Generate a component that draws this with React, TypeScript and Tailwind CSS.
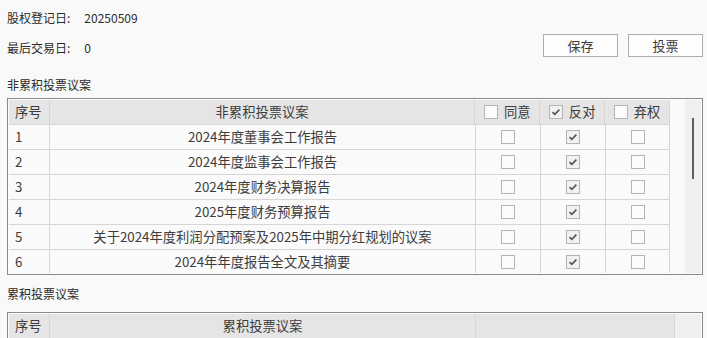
import type { ReactNode } from "react";

const proposals = [
  { no: "1", title: "2024年度董事会工作报告", vote: "against" },
  { no: "2", title: "2024年度监事会工作报告", vote: "against" },
  { no: "3", title: "2024年度财务决算报告", vote: "against" },
  { no: "4", title: "2025年度财务预算报告", vote: "against" },
  { no: "5", title: "关于2024年度利润分配预案及2025年中期分红规划的议案", vote: "against" },
  { no: "6", title: "2024年年度报告全文及其摘要", vote: "against" },
];

function CheckBox({ checked = false }: { checked?: boolean }) {
  return (
    <span
      className={`flex items-center justify-center w-[14px] h-[14px] border border-[#b4b4b4] shrink-0 ${
        checked ? "bg-[#f1f1f1]" : "bg-[#fbfbfb]"
      }`}
    >
      {checked && (
        <svg width="12" height="12" viewBox="0 0 12 12">
          <path d="M2.5 6.2 L4.8 8.4 L9.4 3.6" fill="none" stroke="#555" strokeWidth="1.6" />
        </svg>
      )}
    </span>
  );
}

function HeadVote({ label, checked }: { label: string; checked?: boolean }) {
  return (
    <div className="w-[65px] h-full flex items-center justify-center gap-[6px] border-r border-[#d6d6d6]">
      <CheckBox checked={checked} />
      <span>{label}</span>
    </div>
  );
}

function Cell({ w, children, className = "" }: { w: string; children?: ReactNode; className?: string }) {
  return <div className={`${w} h-full flex items-center border-r border-[#d6d6d6] ${className}`}>{children}</div>;
}

export default function App() {
  return (
    <div
      className="w-[707px] h-[338px] overflow-hidden bg-[#f9f9f9] pl-[7px] pr-[4px] text-[#2b2b2b]"
      style={{ fontFamily: '"Noto Sans CJK SC", "Noto Sans", sans-serif' }}
    >
      {/* top info */}
      <div className="h-[34px] flex items-center text-[12px] leading-[14px] pt-[1px]">
        <span>股权登记日:</span>
        <span className="ml-[14px]">20250509</span>
      </div>
      <div className="h-[23px] flex items-start justify-between">
        <div className="flex text-[12px] leading-[14px] mt-[7px]">
          <span>最后交易日:</span>
          <span className="ml-[14px]">0</span>
        </div>
        <div className="flex gap-[10px]">
          <button className="w-[75px] h-[23px] border border-[#adadad] bg-[#fdfdfd] text-[13px] text-[#3a3a3a] flex items-center justify-center">
            保存
          </button>
          <button className="w-[75px] h-[23px] border border-[#adadad] bg-[#fdfdfd] text-[13px] text-[#3a3a3a] flex items-center justify-center">
            投票
          </button>
        </div>
      </div>

      <div className="mt-[21px] mb-[6px] text-[12px] leading-[14px]">非累积投票议案</div>

      {/* non-cumulative table */}
      <div className="border border-[#8a8a8a] bg-[#fbfbfb] p-[1px]">
        <div className="h-[173px] flex overflow-hidden text-[13.3px] text-[#3c3c3c]">
          <div className="w-[661px] flex flex-col">
            <div className="h-[25px] shrink-0 flex bg-[#e5e5e5] border-b border-[#d6d6d6]">
              <Cell w="w-[41px]" className="pl-[6px]">序号</Cell>
              <Cell w="w-[426px]" className="justify-center">非累积投票议案</Cell>
              <HeadVote label="同意" />
              <HeadVote label="反对" checked />
              <HeadVote label="弃权" />
            </div>
            {proposals.map((p) => (
              <div key={p.no} className="h-[25px] shrink-0 flex bg-[#fafafa] border-b border-[#d6d6d6]">
                <Cell w="w-[41px]" className="pl-[6px]">{p.no}</Cell>
                <Cell w="w-[426px]" className="justify-center whitespace-nowrap">{p.title}</Cell>
                <Cell w="w-[65px]" className="justify-center">
                  <CheckBox checked={p.vote === "for"} />
                </Cell>
                <Cell w="w-[65px]" className="justify-center">
                  <CheckBox checked={p.vote === "against"} />
                </Cell>
                <Cell w="w-[64px]" className="justify-center">
                  <CheckBox checked={p.vote === "abstain"} />
                </Cell>
              </div>
            ))}
          </div>
          <div className="w-[15px] bg-[#fafafa]" />
          <div className="w-[16px] bg-[#efefef] flex justify-center pt-[18px]">
            <div className="w-[2px] h-[61px] bg-[#5f5f5f]" />
          </div>
        </div>
      </div>

      <div className="mt-[12px] mb-[11px] text-[12px] leading-[14px]">累积投票议案</div>

      {/* cumulative table */}
      <div className="border border-[#8a8a8a] bg-[#fbfbfb] p-[1px]">
        <div className="h-[60px] flex flex-col text-[13.3px] text-[#3c3c3c]">
          <div className="h-[25px] shrink-0 flex bg-[#e5e5e5] border-b border-[#d6d6d6]">
            <Cell w="w-[41px]" className="pl-[6px]">序号</Cell>
            <Cell w="w-[426px]" className="justify-center">累积投票议案</Cell>
            <Cell w="w-[199px]" />
            <div className="flex-1 bg-[#efefef]" />
          </div>
        </div>
      </div>
    </div>
  );
}
